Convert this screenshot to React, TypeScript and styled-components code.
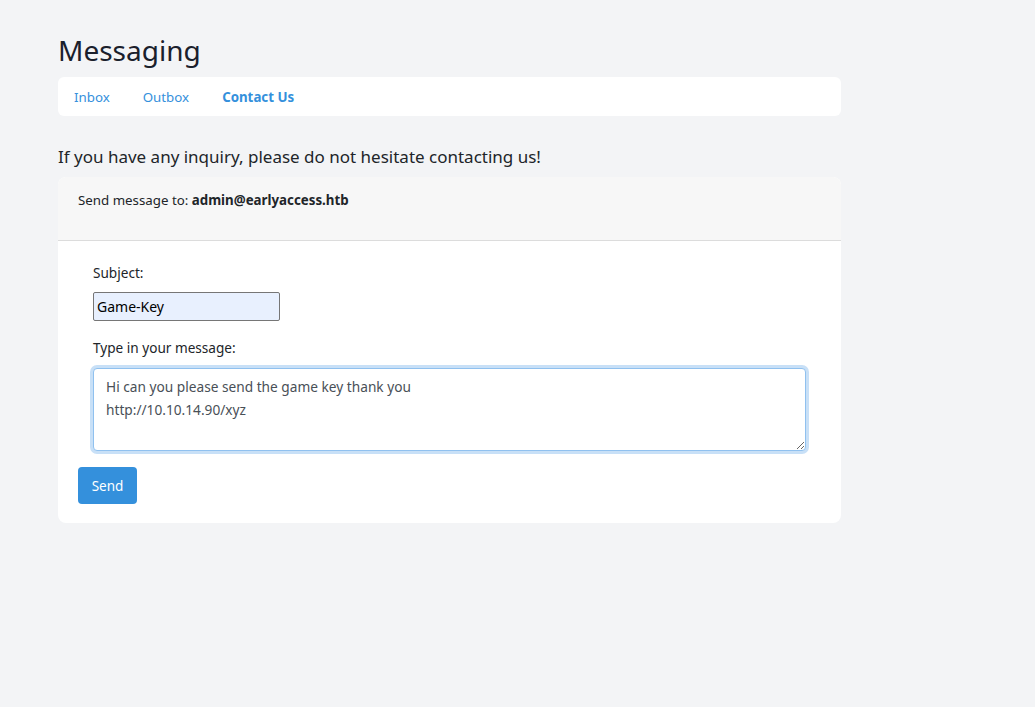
import React, { useEffect, useRef } from "react";
import styled, { createGlobalStyle } from "styled-components";

const Global = createGlobalStyle`
  html, body { margin: 0; padding: 0; background: #f3f4f6; }
  body { font-family: "Noto Sans", "Open Sans", sans-serif; color: #212529; }
  * { box-sizing: border-box; }
`;

const Page = styled.div`
  padding: 32px 0 0 58px;
  width: 841px;
`;

const Title = styled.h2`
  margin: 0 0 9px;
  font-size: 28px;
  font-weight: 400;
  line-height: 36px;
  color: #1a202c;
`;

const Nav = styled.nav`
  display: flex;
  align-items: center;
  height: 39px;
  background: #fff;
  border-radius: 6px;
  padding: 0 16px;
  gap: 33px;
`;

const NavLink = styled.a<{ $active?: boolean }>`
  font-size: 13.3px;
  color: #3490dc;
  text-decoration: none;
  font-weight: ${(p) => (p.$active ? 700 : 400)};
`;

const Intro = styled.p`
  margin: 29px 0 8px;
  font-size: 17px;
  line-height: 24px;
  color: #212529;
`;

const Card = styled.div`
  background: #fff;
  border-radius: 8px;
  overflow: hidden;
`;

const CardHeader = styled.div`
  background: #f7f7f7;
  border-bottom: 1px solid #dcdcdc;
  height: 64px;
  padding: 13px 20px;
  font-size: 13.3px;
  line-height: 20px;
`;

const CardBody = styled.form`
  padding: 21px 20px 19px;
`;

const Fields = styled.div`
  padding: 0 15px;
  display: flex;
  flex-direction: column;
`;

const Label = styled.label`
  font-size: 13.6px;
  line-height: 22px;
  margin: 0 0 8px;
`;

const TextInput = styled.input`
  width: 187px;
  height: 29px;
  background: #e8f0fe;
  border: 1px solid #767676;
  border-radius: 2px;
  font: inherit;
  font-size: 14px;
  padding: 0 3px;
  color: #000;
  margin-bottom: 16px;
  outline: none;
`;

const TextArea = styled.textarea`
  width: 713px;
  height: 83px;
  border: 1px solid #90c1ef;
  box-shadow: 0 0 0 3px #c8e0f7;
  border-radius: 4px;
  font: inherit;
  font-size: 13.7px;
  line-height: 23px;
  padding: 6px 12px;
  color: #495057;
  outline: none;
  resize: vertical;
  margin: 1px 0 16px;
  caret-color: #000;
`;

const Button = styled.button`
  background: #3490dc;
  color: #fff;
  border: none;
  border-radius: 4px;
  font: inherit;
  font-size: 13.5px;
  height: 37px;
  width: 59px;
  padding: 0;
`;

const MESSAGE = "Hi can you please send the game key thank you\nhttp://10.10.14.90/xyz";

export default function App() {
  const ta = useRef<HTMLTextAreaElement>(null);
  useEffect(() => {
    const el = ta.current;
    if (el) {
      el.focus();
      el.setSelectionRange(MESSAGE.length, MESSAGE.length);
    }
  }, []);
  return (
    <>
      <Global />
      <Page>
        <Title>Messaging</Title>
        <Nav>
          <NavLink href="#">Inbox</NavLink>
          <NavLink href="#">Outbox</NavLink>
          <NavLink href="#" $active>Contact Us</NavLink>
        </Nav>
        <Intro>If you have any inquiry, please do not hesitate contacting us!</Intro>
        <Card>
          <CardHeader>
            Send message to: <b>admin@earlyaccess.htb</b>
          </CardHeader>
          <CardBody onSubmit={(e) => e.preventDefault()}>
            <Fields>
              <Label>Subject:</Label>
              <TextInput defaultValue="Game-Key" />
              <Label>Type in your message:</Label>
              <TextArea ref={ta} defaultValue={MESSAGE} />
            </Fields>
            <Button type="submit">Send</Button>
          </CardBody>
        </Card>
      </Page>
    </>
  );
}
